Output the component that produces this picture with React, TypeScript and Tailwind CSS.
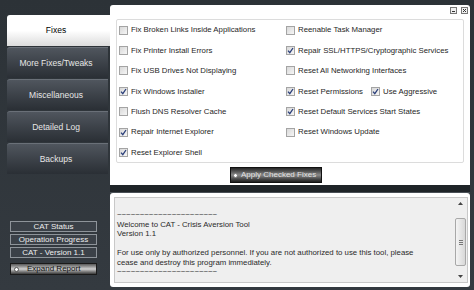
import type React from 'react';

type Fix = { label: string; checked: boolean; extra?: { label: string; checked: boolean } };

const leftFixes: Fix[] = [
	{ label: 'Fix Broken Links Inside Applications', checked: false },
	{ label: 'Fix Printer Install Errors', checked: false },
	{ label: 'Fix USB Drives Not Displaying', checked: false },
	{ label: 'Fix Windows Installer', checked: true },
	{ label: 'Flush DNS Resolver Cache', checked: false },
	{ label: 'Repair Internet Explorer', checked: true },
	{ label: 'Reset Explorer Shell', checked: true },
];

const rightFixes: Fix[] = [
	{ label: 'Reenable Task Manager', checked: false },
	{ label: 'Repair SSL/HTTPS/Cryptographic Services', checked: true },
	{ label: 'Reset All Networking Interfaces', checked: false },
	{ label: 'Reset Permissions', checked: true, extra: { label: 'Use Aggressive', checked: true } },
	{ label: 'Reset Default Services Start States', checked: true },
	{ label: 'Reset Windows Update', checked: false },
];

const tabs = ['Fixes', 'More Fixes/Tweaks', 'Miscellaneous', 'Detailed Log', 'Backups'];

const font = { fontFamily: '"Liberation Sans", Arial, sans-serif' };

const tildes = '~~~~~~~~~~~~~~~~~~~~~~';

const Box: React.FC<{ checked: boolean }> = ({ checked }) => (
	<span className="relative inline-block h-[9px] w-[9px] shrink-0 border border-[#a4a4a4] bg-gradient-to-br from-[#d8d8d8] to-[#f6f6f6]">
		{checked && (
			<svg viewBox="0 0 9 9" className="absolute -top-px -left-px h-[9px] w-[9px]">
				<path d="M2 4.6 L3.8 6.6 L7 2" fill="none" stroke="#2b3f7a" strokeWidth="1.3" />
			</svg>
		)}
	</span>
);

const Row: React.FC<{ fix: Fix }> = ({ fix }) => (
	<div className="flex h-[20.4px] items-center text-[7.8px] text-[#262626]">
		<Box checked={fix.checked} />
		<span className="ml-[3px] whitespace-nowrap">{fix.label}</span>
		{fix.extra && (
			<>
				<span className="ml-[8px]" />
				<Box checked={fix.extra.checked} />
				<span className="ml-[3px] whitespace-nowrap">{fix.extra.label}</span>
			</>
		)}
	</div>
);

const App: React.FC = () => {
	return (
		<div
			className="flex h-[290px] w-[474px] overflow-hidden bg-gradient-to-b from-[#2c3237] to-[#343a40]"
			style={font}
		>
			{/* Sidebar */}
			<div className="flex w-[110px] shrink-0 flex-col pl-[7px]">
				<div className="mt-[15px] flex flex-col gap-px">
					{tabs.map((tab, i) =>
						i === 0 ? (
							<div
								key={tab}
								className="flex h-[31px] items-center justify-center rounded-tl-[3px] bg-gradient-to-b from-white via-white to-[#dcdcdc] pr-[5px] text-[8.5px] text-black"
							>
								{tab}
							</div>
						) : (
							<div
								key={tab}
								className="mr-[2px] flex h-[31px] items-center justify-center rounded-tl-[3px] border-t border-[#6a7078] bg-gradient-to-b from-[#50565e] to-[#2a2f35] pr-[3px] text-[8.5px] text-[#e6e6e6]"
							>
								{tab}
							</div>
						),
					)}
				</div>

				<div className="mt-[47px] flex w-[90px] flex-col gap-[2px] pl-[3px] text-[8px] text-[#eeeeee]">
					<div className="flex h-[11px] items-center justify-center border border-[#8e949a] bg-[#3b4148]">
						CAT Status
					</div>
					<div className="flex h-[11px] items-center justify-center border border-[#8e949a] bg-[#3b4148]">
						Operation Progress
					</div>
					<div className="flex h-[11px] items-center justify-center border border-[#8e949a] bg-[#3b4148]">
						CAT - Version 1.1
					</div>
					<div className="mt-[3px] flex h-[12px] items-center border border-[#1a1a1a] bg-gradient-to-b from-[#5a5a5a] via-[#d0d0d0] to-[#3c3c3c] pl-[3px] text-[#111]">
						<span className="h-[5px] w-[5px] rounded-full border border-[#555] bg-white" />
						<span className="ml-[8px]">Expand Report</span>
					</div>
				</div>
			</div>

			{/* Main */}
			<div className="flex w-[360px] flex-col pt-[5px]">
				<div className="relative h-[180px] rounded-tl-[3px] rounded-tr-[3px] bg-white pt-[14px] pl-[6px]">
					<div className="absolute top-[2px] right-[2px] flex gap-[4px]">
						<svg viewBox="0 0 7 7" className="h-[7px] w-[7px]">
							<rect x="0.5" y="0.5" width="6" height="6" fill="#f0f0f0" stroke="#777" />
							<path d="M2 4.5 H5" stroke="#333" strokeWidth="1" />
						</svg>
						<svg viewBox="0 0 7 7" className="h-[7px] w-[7px]">
							<rect x="0.5" y="0.5" width="6" height="6" fill="#f0f0f0" stroke="#777" />
							<path d="M2 2 L5 5 M5 2 L2 5" stroke="#333" strokeWidth="1" />
						</svg>
					</div>

					<div className="flex h-[144px] w-[348px] rounded-[2px] border border-[#dcdcdc] pl-[2px]">
						<div className="w-[167px]">
							{leftFixes.map((f) => (
								<Row key={f.label} fix={f} />
							))}
						</div>
						<div>
							{rightFixes.map((f) => (
								<Row key={f.label} fix={f} />
							))}
						</div>
					</div>

					<div className="mt-[4px] ml-[114px] flex h-[16px] w-[92px] items-center border border-[#111] bg-gradient-to-b from-[#262626] via-[#8a8a8a] to-[#1e1e1e] pl-[2px] text-[8px] text-[#e2e2e2]">
						<span className="h-[5px] w-[5px] rounded-full border border-[#777] bg-white" />
						<span className="ml-[3px] whitespace-nowrap">Apply Checked Fixes</span>
					</div>
				</div>

				<div className="h-[8px] border-b border-[#4a5056] bg-[#1f2428]" />

				<div className="h-[94px] rounded-[3px] bg-white p-[4px] pr-[2px]">
					<div className="flex h-full border border-[#c8c8c8] bg-[#efefef]">
						<div className="flex-1 pt-[12px] pl-[2px] text-[7.8px] leading-[9.5px] text-[#2a2a2a]">
							<div>{tildes}</div>
							<div>Welcome to CAT - Crisis Aversion Tool</div>
							<div>Version 1.1</div>
							<div className="h-[9.5px]" />
							<div>
								For use only by authorized personnel. If you are not authorized to use this tool, please
							</div>
							<div>cease and destroy this program immediately.</div>
							<div>{tildes}</div>
						</div>
						<div className="mr-px flex w-[11px] flex-col items-center py-[4px]">
							<svg viewBox="0 0 5 3" className="h-[3px] w-[5px]">
								<path d="M0 3 L2.5 0 L5 3 Z" fill="#444" />
							</svg>
							<div className="mt-[13px] flex h-[48px] w-[11px] items-center justify-center rounded-[2px] border border-[#a8a8a8] bg-gradient-to-r from-[#f4f4f4] to-[#d8d8d8]">
								<div className="flex flex-col gap-px">
									<span className="h-px w-[4px] bg-[#777]" />
									<span className="h-px w-[4px] bg-[#777]" />
									<span className="h-px w-[4px] bg-[#777]" />
								</div>
							</div>
							<div className="flex-1" />
							<svg viewBox="0 0 5 3" className="h-[3px] w-[5px]">
								<path d="M0 0 L2.5 3 L5 0 Z" fill="#444" />
							</svg>
						</div>
					</div>
				</div>
			</div>
		</div>
	);
};

export default App;
